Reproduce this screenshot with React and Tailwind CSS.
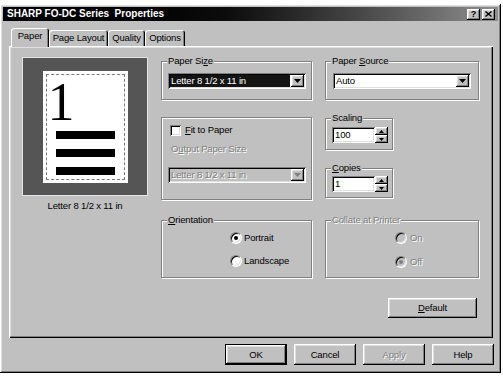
import React from "react";

const RAISED =
  "bg-[#c0c0c0] shadow-[inset_-1px_-1px_0_#000,inset_1px_1px_0_#fff,inset_-2px_-2px_0_#808080,inset_2px_2px_0_#dfdfdf]";
const SUNKEN =
  "shadow-[inset_1px_1px_0_#808080,inset_-1px_-1px_0_#fff,inset_2px_2px_0_#000,inset_-2px_-2px_0_#dfdfdf]";
const DIS = "text-[#808080] [text-shadow:1px_1px_0_#fff]";

function Group({ legend, disabled, className, children }) {
  return (
    <fieldset
      className={`min-w-0 border border-[#808080] shadow-[1px_1px_0_#fff,inset_1px_1px_0_#fff] ${className}`}
    >
      {legend && (
        <legend
          className={`ml-[5px] bg-[#c0c0c0] px-[1px] leading-[12px] ${disabled ? DIS : ""}`}
        >
          {legend}
        </legend>
      )}
      {children}
    </fieldset>
  );
}

function Combo({ text, selected, disabled, className }) {
  return (
    <div
      className={`flex h-[16px] w-[138px] items-center p-[2px] ${SUNKEN} ${
        disabled ? "bg-[#c0c0c0]" : "bg-white"
      } ${className}`}
    >
      <div
        className={`mr-[1px] flex h-full flex-1 items-center pl-[1px] leading-[12px] ${
          selected ? "bg-[#141414] text-white" : ""
        } ${disabled ? DIS : ""}`}
      >
        {text}
      </div>
      <div className={`flex h-[12px] w-[13px] items-center justify-center ${RAISED}`}>
        <svg width="7" height="4" viewBox="0 0 7 4">
          <path d="M0 0H7L3.5 4Z" fill={disabled ? "#808080" : "#000"} />
        </svg>
      </div>
    </div>
  );
}

function Radio({ checked, disabled }) {
  return (
    <span
      className={`flex h-[12px] w-[12px] shrink-0 items-center justify-center rounded-full border border-t-[#808080] border-l-[#808080] border-r-white border-b-white shadow-[inset_1px_1px_0_#000,inset_-1px_-1px_0_#dfdfdf] ${
        disabled ? "bg-[#c0c0c0]" : "bg-white"
      }`}
    >
      {checked && (
        <span
          className={`h-[4px] w-[4px] rounded-full ${disabled ? "bg-[#808080]" : "bg-black"}`}
        />
      )}
    </span>
  );
}

function Spin() {
  return (
    <div className="flex h-[16px] w-[13px] flex-col">
      <div className={`flex h-[8px] items-center justify-center ${RAISED}`}>
        <svg width="5" height="3" viewBox="0 0 5 3">
          <path d="M2.5 0L5 3H0Z" fill="#000" />
        </svg>
      </div>
      <div className={`flex h-[8px] items-center justify-center ${RAISED}`}>
        <svg width="5" height="3" viewBox="0 0 5 3">
          <path d="M0 0H5L2.5 3Z" fill="#000" />
        </svg>
      </div>
    </div>
  );
}

function NumField({ value }) {
  return (
    <div className="flex">
      <div
        className={`flex h-[16px] w-[43px] items-center bg-white pl-[3px] leading-[12px] ${SUNKEN}`}
      >
        {value}
      </div>
      <Spin />
    </div>
  );
}

function Button({ children, className }) {
  return (
    <div
      className={`flex items-center justify-center leading-[12px] ${RAISED} ${className}`}
    >
      {children}
    </div>
  );
}

export default function App() {
  return (
    <div className="h-[376px] w-[503px] overflow-hidden bg-white pt-[4px] font-['Liberation_Sans',Arial,sans-serif] text-[9.5px] tracking-[-0.15px] text-black">
      <div className={`flex h-[369px] w-[501px] flex-col p-[3px] ${RAISED}`}>
        {/* Title bar */}
        <div className="flex h-[14px] items-center justify-between bg-linear-to-r from-black via-[#0c0c0c] via-45% to-[#909090] pr-[3px] pl-[4px]">
          <span className="whitespace-pre text-[10px] leading-[14px] font-bold tracking-normal text-white">
            SHARP FO-DC Series  Properties
          </span>
          <div className="flex gap-[2px]">
            <div className={`flex h-[11px] w-[13px] items-center justify-center ${RAISED}`}>
              <span className="text-[9px] leading-[9px] font-bold">?</span>
            </div>
            <div className={`flex h-[11px] w-[13px] items-center justify-center ${RAISED}`}>
              <svg width="7" height="6" viewBox="0 0 7 6">
                <path d="M0.5 0.5L6.5 5.5M6.5 0.5L0.5 5.5" stroke="#000" strokeWidth="1.4" />
              </svg>
            </div>
          </div>
        </div>

        {/* Tabs */}
        <div className="mt-[7px] ml-[6px] flex h-[18px] items-end pl-[2px]">
          <div className="relative z-10 -mb-[1px] flex h-[19px] w-[38px] items-center justify-center rounded-t-[3px] bg-[#c0c0c0] pb-[2px] shadow-[inset_1px_1px_0_#fff,inset_-1px_0_0_#000,inset_-2px_0_0_#808080]">
            Paper
          </div>
          <div className="flex h-[16px] w-[59px] items-center justify-center rounded-t-[3px] bg-[#c0c0c0] shadow-[inset_1px_1px_0_#fff,inset_-1px_0_0_#000,inset_-2px_0_0_#808080]">
            Page Layout
          </div>
          <div className="flex h-[16px] w-[37px] items-center justify-center rounded-t-[3px] bg-[#c0c0c0] shadow-[inset_1px_1px_0_#fff,inset_-1px_0_0_#000,inset_-2px_0_0_#808080]">
            Quality
          </div>
          <div className="flex h-[16px] w-[40px] items-center justify-center rounded-t-[3px] bg-[#c0c0c0] shadow-[inset_1px_1px_0_#fff,inset_-1px_0_0_#000,inset_-2px_0_0_#808080]">
            Options
          </div>
        </div>

        {/* Panel */}
        <div className="ml-[6px] flex h-[292px] w-[484px] gap-[13px] bg-[#c0c0c0] pt-[9px] pl-[13px] shadow-[inset_1px_1px_0_#fff,inset_-1px_-1px_0_#000,inset_-2px_-2px_0_#808080,inset_2px_2px_0_#dfdfdf]">
          {/* Left column: preview */}
          <div className="flex w-[126px] flex-col items-center">
            <div className="mt-[2px] flex h-[139px] w-[126px] items-center justify-center border border-[#e4e4e4] bg-[#555555]">
              <div className="h-[112px] w-[85px] bg-white p-[3px]">
                <div className="h-full w-full border border-dashed border-[#7a7a7a]">
                  <div className="ml-[1px] font-['Liberation_Serif',serif] text-[54px] leading-[54px] tracking-normal">
                    1
                  </div>
                  <div className="mt-[2px] ml-[9px] flex flex-col gap-[10px]">
                    <div className="h-[8px] w-[59px] bg-black" />
                    <div className="h-[8px] w-[59px] bg-black" />
                    <div className="h-[8px] w-[59px] bg-black" />
                  </div>
                </div>
              </div>
            </div>
            <div className="mt-[4px] leading-[12px]">Letter 8 1/2 x 11 in</div>
          </div>

          {/* Middle column */}
          <div className="flex w-[151px] flex-col">
            <Group
              className="h-[45px]"
              legend={
                <>
                  Paper Si<span className="underline">z</span>e
                </>
              }
            >
              <Combo className="mt-[6px] ml-[6px]" text="Letter 8 1/2 x 11 in" selected />
            </Group>

            <div className="mt-[17px] flex h-[83px] flex-col items-start border border-[#808080] shadow-[1px_1px_0_#fff,inset_1px_1px_0_#fff]">
              <div className="mt-[6px] ml-[8px] flex items-center gap-[4px]">
                <span
                  className={`h-[11px] w-[11px] bg-white shadow-[inset_1px_1px_0_#808080,inset_-1px_-1px_0_#fff,inset_2px_2px_0_#000,inset_-2px_-2px_0_#dfdfdf]`}
                />
                <span className="leading-[12px]">
                  <span className="underline">F</span>it to Paper
                </span>
              </div>
              <div className={`mt-[7px] ml-[9px] leading-[12px] ${DIS}`}>
                O<span className="underline">u</span>tput Paper Size
              </div>
              <Combo className="mt-[12px] ml-[6px]" text="Letter 8 1/2 x 11 in" disabled />
            </div>

            <Group
              className="mt-[14px] h-[64px]"
              legend={
                <>
                  <span className="underline">O</span>rientation
                </>
              }
            >
              <div className="mt-[6px] ml-[68px] flex items-center gap-[2px]">
                <Radio checked />
                <span className="leading-[12px]">Portrait</span>
              </div>
              <div className="mt-[11px] ml-[68px] flex items-center gap-[2px]">
                <Radio />
                <span className="leading-[12px]">Landscape</span>
              </div>
            </Group>
          </div>

          {/* Right column */}
          <div className="flex w-[154px] flex-col">
            <Group
              className="h-[45px]"
              legend={
                <>
                  Paper <span className="underline">S</span>ource
                </>
              }
            >
              <Combo className="mt-[6px] ml-[7px]" text="Auto" />
            </Group>

            <Group className="mt-[12px] h-[38px] w-[68px]" legend="Scaling">
              <div className="mt-[3px] ml-[6px]">
                <NumField value="100" />
              </div>
            </Group>

            <Group
              className="mt-[12px] h-[36px] w-[68px]"
              legend={
                <>
                  <span className="underline">C</span>opies
                </>
              }
            >
              <div className="mt-[2px] ml-[6px]">
                <NumField value="1" />
              </div>
            </Group>

            <Group className="mt-[16px] h-[64px]" legend="Collate at Printer" disabled>
              <div className="mt-[6px] ml-[69px] flex items-center gap-[3px]">
                <Radio disabled />
                <span className={`leading-[12px] ${DIS}`}>On</span>
              </div>
              <div className="mt-[12px] ml-[69px] flex items-center gap-[3px]">
                <Radio checked disabled />
                <span className={`leading-[12px] ${DIS}`}>Off</span>
              </div>
            </Group>

            <Button className="mt-[20px] mr-[2px] h-[20px] w-[89px] self-end">
              <span>
                <span className="underline">D</span>efault
              </span>
            </Button>
          </div>
        </div>

        {/* Footer buttons */}
        <div className="mt-[6px] flex justify-end gap-[7px] pr-[4px]">
          <Button className="h-[21px] w-[62px] border border-black">OK</Button>
          <Button className="h-[21px] w-[62px]">Cancel</Button>
          <Button className={`h-[21px] w-[62px] ${DIS}`}>Apply</Button>
          <Button className="h-[21px] w-[62px]">Help</Button>
        </div>
      </div>
    </div>
  );
}
